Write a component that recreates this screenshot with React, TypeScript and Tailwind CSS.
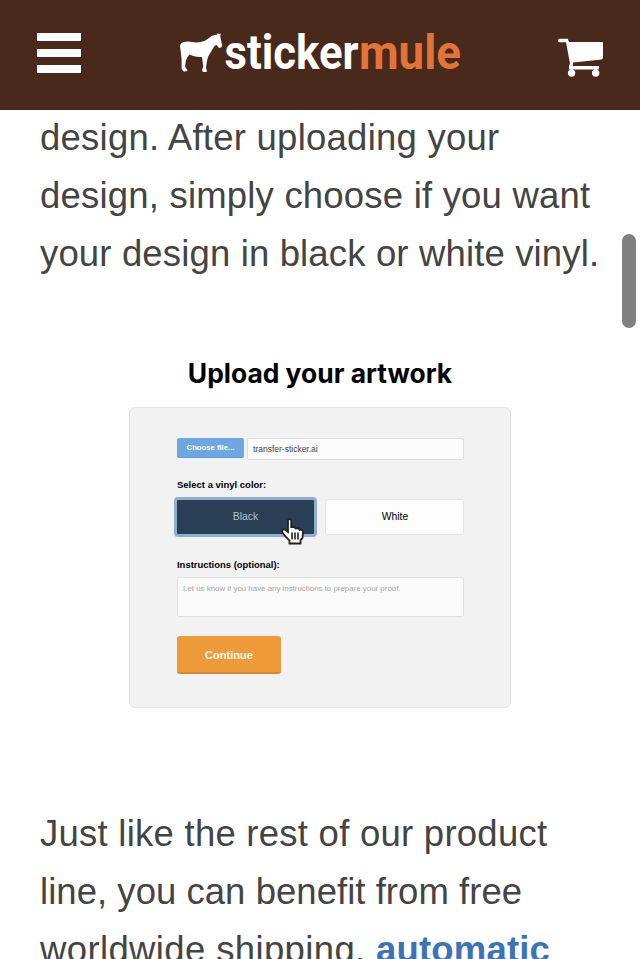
import React from "react";

function Mule() {
  return (
    <svg className="h-10 w-[43px]" viewBox="0 0 43 40" fill="#fff">
      <path d="M0 13 Q.4 9.4 4 8.9 Q8 8.2 12 9 Q18 10.2 24.5 8 Q28.5 5.5 31.7 3 Q34.8 1.4 37.4 1.4 L37.6 0 L39 1.2 L40.7 .3 L40.2 3 L42.2 12.2 Q42 14.4 40 15 L38.4 14.6 L36.8 12 Q34.8 12.2 34 13.7 L31 18.7 L28 23.7 L26.8 29 L26 34.6 L27 38.4 Q24.5 39.6 22.5 38.4 L22.2 36.4 L23.2 33.5 L22 24 Q17 24.2 13.3 22.9 L9.5 21.4 Q6.8 24 5.9 27.5 L5.1 33.7 L7.6 37.4 Q6 38.9 3.2 38.2 L1.6 35.6 L1.5 25 Z" />
    </svg>
  );
}

function Cart() {
  return (
    <svg className="h-10 w-[46px]" viewBox="0 0 46 40" fill="#fff">
      <path d="M1.6 .8 H9.8 L11 4 H43.8 Q45 4 45 5.2 V20 L43.8 21.4 L15 24.6 L14.8 28 H40.8 V31.6 H11 V28 L12 25.6 L8 4.2 H1.6 Q0 4 0 2.5 Q0 .8 1.6 .8Z" />
      <path d="M12.5 30 h2.5 v3 h-2.5z M36.5 30 H39 v3 h-2.5z" />
      <circle cx="13.6" cy="35.1" r="3.7" />
      <circle cx="37.7" cy="35.1" r="3.7" />
    </svg>
  );
}

function Hand() {
  return (
    <svg className="absolute left-[104px] top-[21px] h-[28px] w-[24px]" viewBox="0 0 24 28">
      <path d="M7 2 Q8.6 0 10.2 2 V9 L13.5 9 L14.5 10.5 L17.5 10 L18.5 12 Q21.8 11 22 14 L21.5 20 L19.5 22 V25.5 H8.5 V22.5 L4.5 18.5 L1 14 Q1 11 3.8 11.5 L7 14 Z" fill="#fff" stroke="#222" strokeWidth="1.8" />
      <path d="M11 14.5 V21.5 M14 14.5 V21.5 M17 14.5 V21.5" stroke="#222" strokeWidth="1.6" />
    </svg>
  );
}

export default function App() {
  return (
    <div className="relative flex h-[959px] w-[640px] flex-col overflow-hidden bg-white font-['Liberation_Sans',Arial,sans-serif]">
      <header className="flex h-[110px] shrink-0 items-start bg-[#49291b] pl-[37px]">
        <button className="mt-[33px] flex w-[44px] flex-col gap-2" aria-label="Menu">
          <span className="h-2 w-full bg-white" />
          <span className="h-2 w-full bg-white" />
          <span className="h-2 w-full bg-white" />
        </button>
        <div className="ml-[99px] mt-[33px] flex w-[378px] items-start">
          <Mule />
          <svg className="-mt-[13px] h-[66px] w-[250px] font-['Roboto',sans-serif] text-[48px] font-bold" viewBox="0 0 250 66">
            <text x="1.5" y="49" textLength="134" lengthAdjust="spacingAndGlyphs" fill="#fff">sticker</text>
            <text x="136" y="49" textLength="102" lengthAdjust="spacingAndGlyphs" fill="#e27439">mule</text>
          </svg>
        </div>
        <button className="mt-[38px]" aria-label="Cart"><Cart /></button>
      </header>

      <main className="flex flex-col">
        <p className="-mt-px h-[233px] whitespace-nowrap pl-10 text-[36.5px] leading-[58px] text-[#444]">
          <span className="block tracking-[0.25px]">design. After uploading your</span>
          <span className="block tracking-[0.2px]">design, simply choose if you want</span>
          <span className="block tracking-[0.15px]">your design in black or white vinyl.</span>
        </p>
        <section className="flex h-[463px] flex-col items-center">
          <h1 className="mt-[13px] h-[52px] whitespace-nowrap font-['Inter',sans-serif] text-[26.4px] font-bold leading-9 text-black">Upload your artwork</h1>
          <div className="flex h-[301px] w-[382px] flex-col rounded-[6px] border border-[#e3e3e3] bg-[#f2f2f2] pl-[47px] pt-[30px] text-[9.6px] text-black">
            <div className="flex h-[22px] w-[287px] gap-[3px]">
              <span className="flex h-[20px] w-[67px] items-center justify-center rounded-[2px] border-b border-[#5f9bd6] bg-[#70a6e0] text-[7.7px] font-bold text-white">Choose file...</span>
              <span className="flex h-[22px] flex-1 items-center rounded-[2px] border border-[#dedede] bg-[#fcfcfc] pl-[5px] text-[8.5px] text-[#444]">transfer-sticker.ai</span>
            </div>
            <div className="mt-[17px] h-[15px] whitespace-nowrap text-[9.5px] font-bold leading-[15px]">Select a vinyl color:</div>
            <div className="relative mt-[5px] flex h-[40px] w-[287px] items-center justify-between">
              <span className="-ml-[3px] flex h-[40px] w-[143px] items-center justify-center rounded-[4px] border-[3px] border-[#8eafd3] bg-[#293f56] text-[10.5px] text-[#b4c0cb]">Black</span>
              <span className="flex h-[36px] w-[139px] items-center justify-center rounded-[3px] border border-[#e4e4e4] bg-[#fdfdfd] pl-px text-[10.4px]">White</span>
              <Hand />
            </div>
            <div className="mt-[20px] h-[15px] whitespace-nowrap text-[9.45px] font-bold leading-[15px]">Instructions (optional):</div>
            <div className="mt-[5px] h-[40px] w-[287px] rounded-[2px] border border-[#e0e0e0] bg-[#fafafa] pl-[5px] pt-[5px] text-[7.9px] leading-3 text-[#a8a8a8]">Let us know if you have any instructions to prepare your proof.</div>
            <button className="mt-[19px] h-[38px] w-[104px] rounded-[3px] border-b-2 border-[#d18837] bg-[#ee9b3a] pt-[2px] text-[11.1px] font-bold text-[#fff9e9]">Continue</button>
          </div>
        </section>
        <p className="h-[154px] overflow-hidden whitespace-nowrap pl-10 text-[36.5px] leading-[58px] text-[#444]">
          <span className="block tracking-[0.25px]">Just like the rest of our product</span>
          <span className="block tracking-[0.04px]">line, you can benefit from free</span>
          <span className="block tracking-[0.37px]">worldwide shipping, <a className="font-bold tracking-[0.18px] text-[#3c73b6]">automatic</a></span>
        </p>
      </main>
      <div className="absolute left-[622px] top-[234px] h-[94px] w-[14px] rounded-full bg-[#808080]" />
    </div>
  );
}
